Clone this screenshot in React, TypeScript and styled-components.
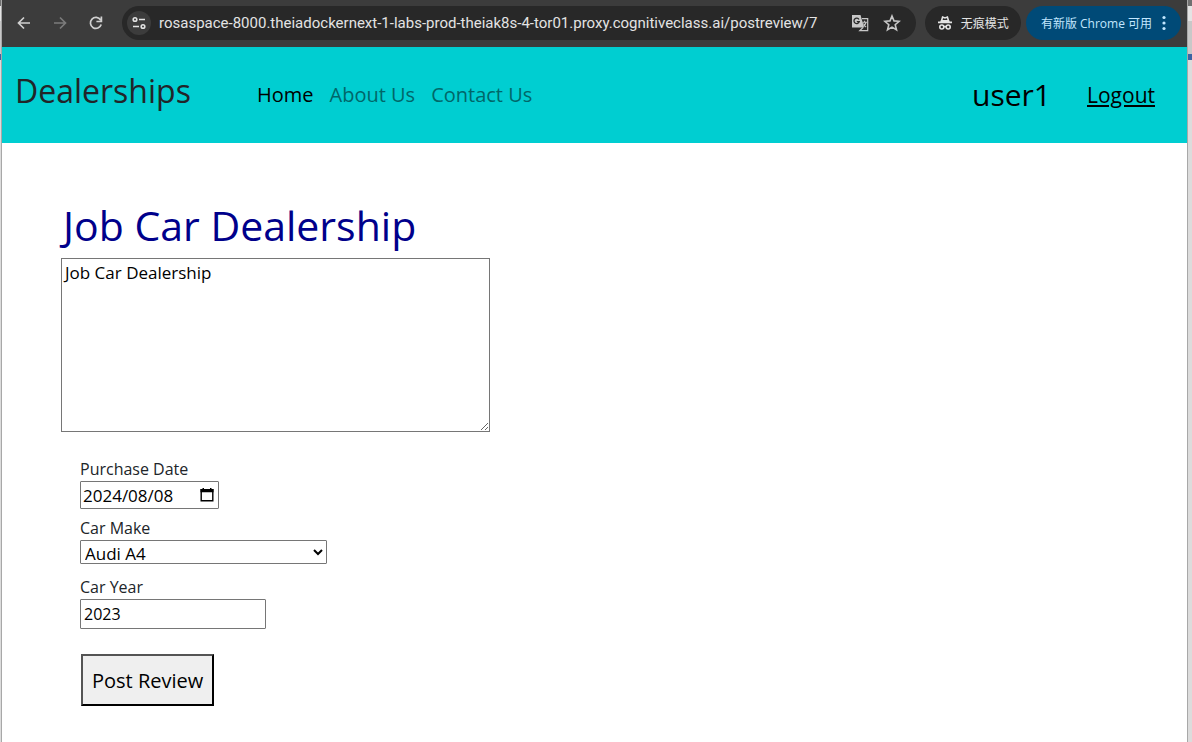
import React, { useState } from 'react';
import styled, { createGlobalStyle } from 'styled-components';

const uiFont = `"Open Sans", "Noto Sans CJK SC", sans-serif`;

const GlobalStyle = createGlobalStyle`
  *, *::before, *::after { box-sizing: border-box; }
  body { margin: 0; font-family: ${uiFont}; color: #212529; background: #fff; }
  button, input, select, textarea { font-family: inherit; color: #000; }
`;

const Desktop = styled.div`
  min-height: 100vh;
  padding: 0 4px 0 1px;
  display: flex;
  background: linear-gradient(#707070 0 6px, #e4e4e4 6px 21px, #c8c8c8 21px 54px, #3c64a4 54px 60px, #dcdcdc 60px);
`;

const Window = styled.div`
  flex: 1;
  min-width: 0;
  background: #fff;
  border: solid #a8a8a8;
  border-width: 0 1px;
`;

const Toolbar = styled.header`
  height: 47px;
  padding: 6px 6px 7px 12px;
  display: flex;
  align-items: center;
  background: #3c3c3c;
  color: #c7c7c7;
`;

const ToolButton = styled.button<{ $dim?: boolean }>`
  width: 20px;
  height: 20px;
  margin-right: 16px;
  padding: 0;
  border: 0;
  background: none;
  color: ${({ $dim }) => ($dim ? '#7b7b7b' : '#d0d0d0')};
  display: grid;
  place-items: center;
`;

const AddressBar = styled.div`
  flex: 1;
  min-width: 0;
  height: 34px;
  margin-right: 9px;
  padding: 0 14px 0 5px;
  display: flex;
  align-items: center;
  background: #282828;
  border-radius: 17px;
`;

const SiteInfo = styled.button`
  flex: none;
  width: 24px;
  height: 24px;
  padding: 0;
  border: 0;
  border-radius: 50%;
  background: #3c3c3c;
  color: #e3e3e3;
  display: grid;
  place-items: center;
`;

const Address = styled.input`
  flex: 1;
  min-width: 0;
  margin-left: 8px;
  padding: 0;
  border: 0;
  background: none;
  font-size: 15px;
  font-family: Roboto, sans-serif;
  color: #e3e3e3;
`;

const BarIcon = styled.button`
  flex: none;
  width: 20px;
  height: 20px;
  margin-left: 12px;
  padding: 0;
  border: 0;
  background: none;
  color: #c7c7c7;
  display: grid;
  place-items: center;
`;

const Chip = styled.button<{ $update?: boolean }>`
  flex: none;
  height: 34px;
  margin-right: ${({ $update }) => ($update ? '0' : '5px')};
  padding: ${({ $update }) => ($update ? '0 15px' : '0 12px')};
  border: 0;
  border-radius: 17px;
  display: flex;
  align-items: center;
  gap: ${({ $update }) => ($update ? '10px' : '8px')};
  font-size: 12px;
  background: ${({ $update }) => ($update ? '#004a77' : '#282828')};
  color: ${({ $update }) => ($update ? '#c2e7ff' : '#e3e3e3')};
`;

const Navbar = styled.nav`
  height: 96px;
  padding: 0 32px 0 13px;
  display: flex;
  align-items: center;
  background: #00ced1;
`;

const Brand = styled.h2`
  width: 242px;
  margin: 0;
  padding-bottom: 8px;
  font-size: 32px;
  line-height: 40px;
  font-weight: 400;
`;

const NavLinks = styled.div`
  flex: 1;
  display: flex;
  gap: 16px;
`;

const NavLink = styled.a<{ $active?: boolean }>`
  font-size: 20px;
  line-height: 30px;
  text-decoration: none;
  color: ${({ $active }) => ($active ? '#000' : '#006769')};
`;

const Account = styled.div`
  display: flex;
  align-items: center;
  gap: 36px;
  color: #000;
`;

const UserName = styled.span`
  font-size: 30px;
  line-height: 40px;
`;

const Logout = styled.a`
  font-size: 21px;
  line-height: 30px;
  color: #000;
`;

const Page = styled.form`
  padding: 56px 59px 0;
`;

const Title = styled.h1`
  margin: 0;
  padding-left: 2px;
  font-size: 41px;
  line-height: 52px;
  font-weight: 400;
  color: #00008b;
`;

const Review = styled.textarea`
  display: block;
  width: 429px;
  max-width: 100%;
  height: 174px;
  margin-top: 7px;
  padding: 2px 3px;
  border: 1px solid #767676;
  background: #fff;
  font-size: 17px;
  line-height: 24px;
`;

const Fields = styled.div`
  padding: 25px 19px;
  display: flex;
  flex-direction: column;
  align-items: flex-start;
`;

const Label = styled.label`
  font-size: 16px;
  line-height: 24px;
`;

const DateBox = styled.div`
  width: 139px;
  height: 28px;
  margin-bottom: 7px;
  padding: 0 3px 0 2px;
  display: flex;
  align-items: center;
  border: 1px solid #767676;
  border-radius: 1px;
`;

const DateInput = styled.input`
  flex: 1;
  min-width: 0;
  padding: 0;
  border: 0;
  background: none;
  font-size: 17px;
`;

const CalendarButton = styled.button`
  width: 16px;
  height: 16px;
  padding: 0;
  border: 0;
  background: none;
  display: grid;
`;

const MakeSelect = styled.select`
  width: 247px;
  height: 24px;
  margin-bottom: 11px;
  padding: 0;
  border: 1px solid #767676;
  border-radius: 1px;
  background-color: #fff;
  font-size: 17px;
  line-height: 22px;
`;

const YearInput = styled.input`
  width: 186px;
  height: 30px;
  padding: 0 3px;
  border: 1px solid #767676;
  border-radius: 1px;
  font-size: 16px;
`;

const PostButton = styled.button`
  height: 52px;
  margin: 25px 0 0 1px;
  padding: 0 9px;
  border: 2px outset #000;
  background: #efefef;
  font-size: 20px;
`;

const stroke = { fill: 'none', stroke: 'currentColor', strokeWidth: 2 };

const BackIcon = () => (
  <svg width="16" height="16" viewBox="0 0 16 16" {...stroke} strokeWidth="1.7"><path d="M14 8H3M8 2.500 2.500 8 8 13.500" /></svg>
);
const ForwardIcon = () => (
  <svg width="16" height="16" viewBox="0 0 16 16" {...stroke} strokeWidth="1.7"><path d="M2 8h11M8 2.500 13.500 8 8 13.500" /></svg>
);
const ReloadIcon = () => (
  <svg width="16" height="16" viewBox="0 0 16 16" {...stroke} strokeWidth="1.7"><path d="M13.200 9.500A5.500 5.500 0 1 1 12.600 5M13.400 1.500v5h-5" /></svg>
);
const TuneIcon = () => (
  <svg width="16" height="16" viewBox="0 0 16 16" {...stroke} strokeWidth="1.6">
    <circle cx="4" cy="4.500" r="1.800" /><path d="M8 4.500h6M2 11.500h6" /><circle cx="12" cy="11.500" r="1.800" />
  </svg>
);
const TranslateIcon = () => (
  <svg width="18" height="18" viewBox="0 0 18 18" fill="none">
    <path d="M1 1h8.500l3.600 12.500H1z" fill="#c7c7c7" />
    <path d="M11 4.700h5.700v12H8.800l3.200-3.200" stroke="#c7c7c7" strokeWidth="1.200" />
    <path d="M8 5.500A2.700 2.700 0 1 0 8.300 7.600H5.800" stroke="#282828" strokeWidth="1.300" />
    <path d="M11.400 8.200h4.500M13.600 6.800v1.400M15 8.500c-.6 1.800-1.400 3-2.400 3.800M12.500 9.500c.7 1.500 1.500 2.700 2.600 3.500" stroke="#c7c7c7" strokeWidth="1.100" />
  </svg>
);
const StarIcon = () => (
  <svg width="18" height="18" viewBox="0 0 18 18" {...stroke} strokeWidth="1.600">
    <path d="m9 2 2 4.900 5.200.4-4 3.400 1.300 5.100L9 13.100l-4.500 2.700 1.300-5.100-4-3.400 5.200-.4z" />
  </svg>
);
const IncognitoIcon = () => (
  <svg width="16" height="16" viewBox="0 0 16 16">
    <path d="M4.200 7 5.600 2.100 8 2.900l2.400-.8L11.800 7" {...stroke} strokeWidth="1.600" />
    <path d="M4 5h8l.5 1.500H15v1.700H1V6.500h2.500z" fill="currentColor" />
    <g {...stroke} strokeWidth="1.600"><circle cx="4.800" cy="12" r="2" /><circle cx="11.200" cy="12" r="2" /><path d="M6.800 11.600h2.400" /></g>
  </svg>
);
const DotsIcon = () => (
  <svg width="4" height="16" viewBox="0 0 4 16" fill="currentColor">
    <circle cx="2" cy="2.500" r="1.600" /><circle cx="2" cy="8" r="1.600" /><circle cx="2" cy="13.500" r="1.600" />
  </svg>
);
const CalendarIcon = () => (
  <svg width="16" height="16" viewBox="0 0 16 16">
    <path d="M2.200 2.700h11.600v11H2.200z" fill="none" stroke="#000" strokeWidth="1.400" />
    <path d="M1.500 2h13v3.200h-13zM3.500 1h1.500v2H3.500zM11 1h1.500v2H11z" />
  </svg>
);

export default function App() {
  const [review, setReview] = useState('Job Car Dealership');
  const [date, setDate] = useState('2024/08/08');
  const [year, setYear] = useState('2023');
  return (
    <>
      <GlobalStyle />
      <Desktop>
        <Window>
          <Toolbar>
            <ToolButton aria-label="Back"><BackIcon /></ToolButton>
            <ToolButton aria-label="Forward" $dim><ForwardIcon /></ToolButton>
            <ToolButton aria-label="Reload"><ReloadIcon /></ToolButton>
            <AddressBar>
              <SiteInfo aria-label="Site information"><TuneIcon /></SiteInfo>
              <Address
                aria-label="Address"
                defaultValue="rosaspace-8000.theiadockernext-1-labs-prod-theiak8s-4-tor01.proxy.cognitiveclass.ai/postreview/7"
              />
              <BarIcon aria-label="Translate"><TranslateIcon /></BarIcon>
              <BarIcon aria-label="Bookmark"><StarIcon /></BarIcon>
            </AddressBar>
            <Chip><IncognitoIcon />无痕模式</Chip>
            <Chip $update>有新版 Chrome 可用<DotsIcon /></Chip>
          </Toolbar>
          <Navbar>
            <Brand>Dealerships</Brand>
            <NavLinks>
              <NavLink href="#home" $active>Home</NavLink>
              <NavLink href="#about">About Us</NavLink>
              <NavLink href="#contact">Contact Us</NavLink>
            </NavLinks>
            <Account>
              <UserName>user1</UserName>
              <Logout href="#logout">Logout</Logout>
            </Account>
          </Navbar>
          <Page onSubmit={(e) => e.preventDefault()}>
            <Title>Job Car Dealership</Title>
            <Review aria-label="Review" value={review} onChange={(e) => setReview(e.target.value)} />
            <Fields>
              <Label htmlFor="date">Purchase Date</Label>
              <DateBox>
                <DateInput id="date" value={date} onChange={(e) => setDate(e.target.value)} />
                <CalendarButton type="button" aria-label="Choose date"><CalendarIcon /></CalendarButton>
              </DateBox>
              <Label htmlFor="make">Car Make</Label>
              <MakeSelect id="make"><option>Audi A4</option></MakeSelect>
              <Label htmlFor="year">Car Year</Label>
              <YearInput id="year" value={year} onChange={(e) => setYear(e.target.value)} />
              <PostButton type="submit">Post Review</PostButton>
            </Fields>
          </Page>
        </Window>
      </Desktop>
    </>
  );
}
